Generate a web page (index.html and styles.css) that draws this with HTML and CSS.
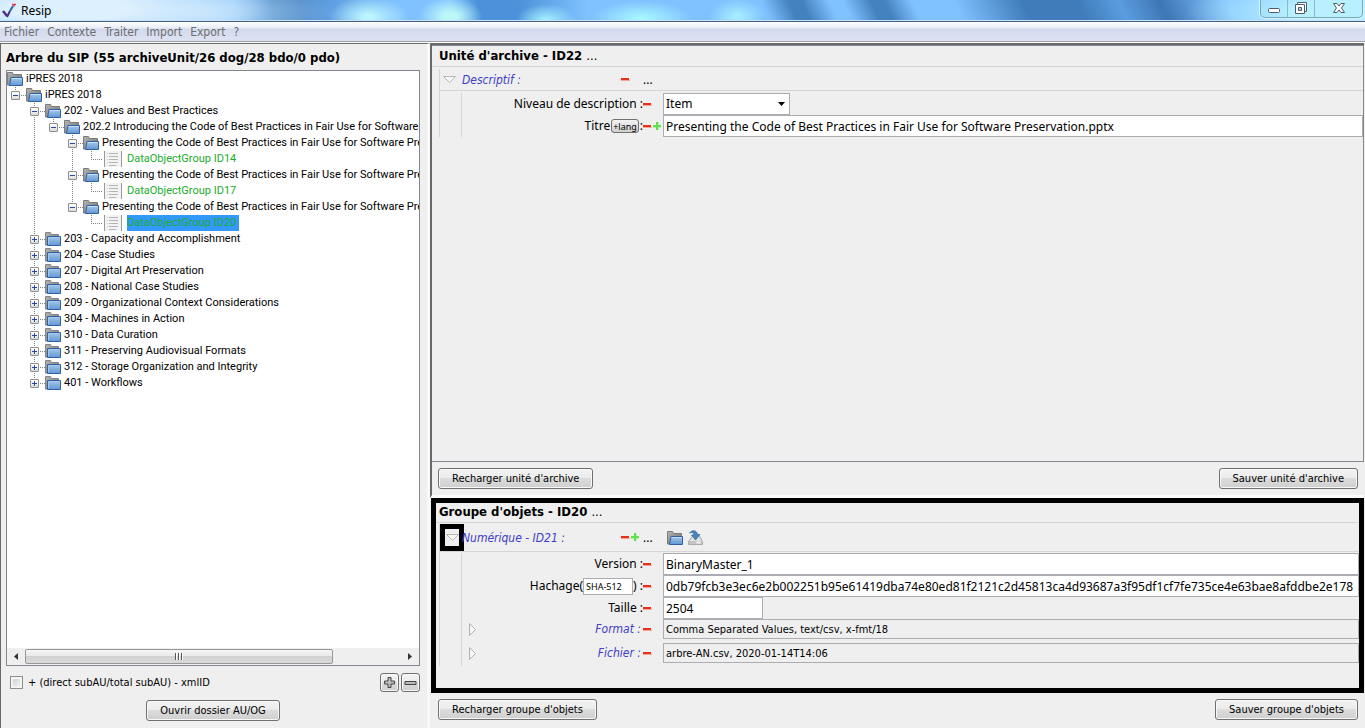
FILE: index.html
```html
<!DOCTYPE html>
<html lang="fr">
<head>
<meta charset="utf-8">
<title>Resip</title>
<link rel="stylesheet" href="styles.css">
</head>
<body>
<svg class="defs" aria-hidden="true">
  <defs>
    <linearGradient id="gray" x1="0" y1="0" x2="1" y2="1"><stop offset="0" stop-color="#b4b4b4"/><stop offset="1" stop-color="#707070"/></linearGradient>
    <linearGradient id="blue" x1="0" y1="0" x2="0" y2="1"><stop offset="0" stop-color="#a9c8ea"/><stop offset="1" stop-color="#5f97d4"/></linearGradient>
    <symbol id="open" viewBox="0 0 16 16">
      <path d="M.5 14V1.500h5l1 2h8V14z" fill="url(#gray)" stroke="#7c7c7c"/>
      <path d="M2.500 14.500 4 6.500h11.500v8z" fill="url(#blue)" stroke="#2f62a5"/>
      <path d="M4.500 7.500h10" stroke="#c9def4"/>
    </symbol>
    <symbol id="closed" viewBox="0 0 16 16">
      <path d="M.5 14V1.500h5l1 2h7V14z" fill="url(#gray)" stroke="#858585"/>
      <path d="M2.500 14.500v-9h13v9z" fill="url(#blue)" stroke="#2f62a5"/>
      <path d="M3.500 13.500v-7h11" fill="none" stroke="#a9c8ea"/>
    </symbol>
    <symbol id="doc" viewBox="0 0 18 16">
      <path d="M0 0h18v16H0z" fill="#f3f3f3"/>
      <path d="M.5 0v16M17.500 0v16" stroke="#999"/>
      <path d="M5 2.500h9M5 5.500h9M5 8.500h9M5 11.500h9M5 14.500h7" stroke="#b4b4b4"/>
      <path d="M3 2.500h1M3 5.500h1M3 8.500h1M3 11.500h1" stroke="#ccc"/>
    </symbol>
    <symbol id="minus" viewBox="0 0 9 9"><path d="M0 5.500h9" stroke="#f5a598"/><path d="M0 3h8v2H0z" fill="#e8301a"/></symbol>
    <symbol id="plus" viewBox="0 0 9 9"><path d="M3 0h3v8H3zM0 3h8v3H0z" fill="#b5f0ad"/><path d="M3 0h2v8H3zM0 3h8v2H0z" fill="#5fe050"/></symbol>
    <symbol id="down" viewBox="0 0 13 7"><path d="M.5 .5h12L6.500 6.500z" fill="#f7f7f7" stroke="#b8b8b8"/></symbol>
    <symbol id="right" viewBox="0 0 7 13"><path d="M.5 .5v12L6.500 6.500z" fill="#f7f7f7" stroke="#b0b0b0"/></symbol>
  </defs>
</svg>

<div class="window">
  <header class="titlebar">
    <svg class="logo" viewBox="0 0 14 16" width="14" height="16"><path d="M1 8 5 13" stroke="#5b2a86" stroke-width="2.500" fill="none"/><path d="M5 14 8 8" stroke="#43307f" stroke-width="2" fill="none"/><path d="M8 8 11 3" stroke="#2467b4" stroke-width="2" fill="none"/><path d="M10 1.500h4M12 1.500v2" stroke="#e0354d" stroke-width="1.500" fill="none"/></svg>
    <span class="app-name">Resip</span>
    <div class="controls">
      <button aria-label="Réduire"><svg width="12" height="16" viewBox="0 0 12 16"><rect x=".5" y="8.500" width="11" height="4" rx="1" fill="#fff" stroke="#4f5a6b"/></svg></button>
      <button aria-label="Restaurer"><svg width="12" height="16" viewBox="0 0 12 16"><path d="M2.500 2.500h9v9h-9z" fill="#fff" stroke="#4f5a6b"/><path d="M.5 4.500h9v9h-9z" fill="#fff" stroke="#4f5a6b"/><path d="M3.500 7.500h3v3h-3z" fill="#9fd4f5" stroke="#4f5a6b"/></svg></button>
      <button class="close" aria-label="Fermer"><svg width="12" height="16" viewBox="0 0 12 16"><path d="M.5 3.500h3.500L6 6l2-2.500h3.500L8.500 8l3 4.500H8L6 10l-2 2.500H.5L3.500 8z" fill="#fff" stroke="#4f5a6b"/></svg></button>
    </div>
  </header>

  <nav class="menu">
    <button>Fichier</button><button>Contexte</button><button>Traiter</button><button>Import</button><button>Export</button><button>?</button>
  </nav>

  <main class="work">
    <section class="left">
      <h1 class="heading">Arbre du SIP (55 archiveUnit/26 dog/28 bdo/0 pdo)</h1>
      <div class="tree-box">
        <div class="tree">
          <div class="row"><svg class="ico"><use href="#open"/></svg><span>iPRES 2018</span></div>
          <ul>
            <li>
              <div class="row"><button class="exp" aria-label="Replier"></button><svg class="ico"><use href="#open"/></svg><span>iPRES 2018</span></div>
              <ul class="nested">
                <li>
                  <div class="row"><button class="exp" aria-label="Replier"></button><svg class="ico"><use href="#open"/></svg><span>202 - Values and Best Practices</span></div>
                  <ul class="nested">
                    <li>
                      <div class="row"><button class="exp" aria-label="Replier"></button><svg class="ico"><use href="#open"/></svg><span>202.2 Introducing the Code of Best Practices in Fair Use for Software</span></div>
                      <ul class="nested">
                        <li>
                          <div class="row"><button class="exp" aria-label="Replier"></button><svg class="ico"><use href="#open"/></svg><span>Presenting the Code of Best Practices in Fair Use for Software Pre</span></div>
                          <ul class="nested"><li><div class="row leaf"><svg class="doc"><use href="#doc"/></svg><span>DataObjectGroup ID14</span></div></li></ul>
                        </li>
                        <li>
                          <div class="row"><button class="exp" aria-label="Replier"></button><svg class="ico"><use href="#open"/></svg><span>Presenting the Code of Best Practices in Fair Use for Software Pre</span></div>
                          <ul class="nested"><li><div class="row leaf"><svg class="doc"><use href="#doc"/></svg><span>DataObjectGroup ID17</span></div></li></ul>
                        </li>
                        <li>
                          <div class="row"><button class="exp" aria-label="Replier"></button><svg class="ico"><use href="#open"/></svg><span>Presenting the Code of Best Practices in Fair Use for Software Pre</span></div>
                          <ul class="nested"><li><div class="row leaf"><svg class="doc"><use href="#doc"/></svg><span class="selected">DataObjectGroup ID20</span></div></li></ul>
                        </li>
                      </ul>
                    </li>
                  </ul>
                </li>
                <li><div class="row"><button class="exp more" aria-label="Déplier"></button><svg class="ico"><use href="#closed"/></svg><span>203 - Capacity and Accomplishment</span></div></li>
                <li><div class="row"><button class="exp more" aria-label="Déplier"></button><svg class="ico"><use href="#closed"/></svg><span>204 - Case Studies</span></div></li>
                <li><div class="row"><button class="exp more" aria-label="Déplier"></button><svg class="ico"><use href="#closed"/></svg><span>207 - Digital Art Preservation</span></div></li>
                <li><div class="row"><button class="exp more" aria-label="Déplier"></button><svg class="ico"><use href="#closed"/></svg><span>208 - National Case Studies</span></div></li>
                <li><div class="row"><button class="exp more" aria-label="Déplier"></button><svg class="ico"><use href="#closed"/></svg><span>209 - Organizational Context Considerations</span></div></li>
                <li><div class="row"><button class="exp more" aria-label="Déplier"></button><svg class="ico"><use href="#closed"/></svg><span>304 - Machines in Action</span></div></li>
                <li><div class="row"><button class="exp more" aria-label="Déplier"></button><svg class="ico"><use href="#closed"/></svg><span>310 - Data Curation</span></div></li>
                <li><div class="row"><button class="exp more" aria-label="Déplier"></button><svg class="ico"><use href="#closed"/></svg><span>311 - Preserving Audiovisual Formats</span></div></li>
                <li><div class="row"><button class="exp more" aria-label="Déplier"></button><svg class="ico"><use href="#closed"/></svg><span>312 - Storage Organization and Integrity</span></div></li>
                <li><div class="row"><button class="exp more" aria-label="Déplier"></button><svg class="ico"><use href="#closed"/></svg><span>401 - Workflows</span></div></li>
              </ul>
            </li>
          </ul>
        </div>
        <div class="scrollbar">
          <button class="arrow" aria-label="Défiler à gauche"><svg width="4" height="7" viewBox="0 0 4 7"><path d="M4 0v7L0 3.500z" fill="#333"/></svg></button>
          <div class="track"><div class="thumb"><i></i><i></i><i></i></div></div>
          <button class="arrow" aria-label="Défiler à droite"><svg width="4" height="7" viewBox="0 0 4 7"><path d="M0 0v7l4-3.500z" fill="#333"/></svg></button>
        </div>
      </div>
      <div class="options">
        <label><input class="tick" type="checkbox">+ (direct subAU/total subAU) - xmlID</label>
        <div class="zoomers">
          <button class="btn small" aria-label="Plus"><svg width="13" height="13" viewBox="0 0 13 13"><path d="M5 1.500h3V5h3.500v3H8v3.500H5V8H1.500V5H5z" fill="#bbb" stroke="#444"/></svg></button>
          <button class="btn small" aria-label="Moins"><svg width="13" height="13" viewBox="0 0 13 13"><path d="M1 5.500h11v3H1z" fill="#bbb" stroke="#444"/></svg></button>
        </div>
      </div>
      <div class="center"><button class="btn">Ouvrir dossier AU/OG</button></div>
    </section>

    <div class="right">
      <section class="unit">
        <div class="panel">
          <h2 class="heading">Unité d'archive - ID22 <button class="dots">...</button></h2>
          <div class="group">
            <div class="group-head">
              <button class="fold" aria-label="Replier"><svg width="13" height="7"><use href="#down"/></svg></button>
              <span class="group-name">Descriptif :</span>
              <button class="act" aria-label="Supprimer"><svg><use href="#minus"/></svg></button>
              <button class="act dots last">...</button>
            </div>
            <div class="fields">
              <div class="field">
                <div class="name"><label for="level">Niveau de description :</label></div>
                <div class="acts"><button class="act" aria-label="Supprimer"><svg><use href="#minus"/></svg></button></div>
                <div class="combo"><select id="level"><option>Item</option></select><svg width="7" height="4" viewBox="0 0 7 4"><path d="M0 0h7L3.500 4z"/></svg></div>
              </div>
              <div class="field">
                <div class="name"><label for="title">Titre</label><button class="lang">+lang</button><span>:</span></div>
                <div class="acts"><button class="act" aria-label="Supprimer"><svg><use href="#minus"/></svg></button><button class="act" aria-label="Ajouter"><svg><use href="#plus"/></svg></button></div>
                <input class="text" id="title" value="Presenting the Code of Best Practices in Fair Use for Software Preservation.pptx">
              </div>
            </div>
          </div>
        </div>
        <div class="bar"><button class="btn">Recharger unité d'archive</button><button class="btn">Sauver unité d'archive</button></div>
      </section>

      <section class="object">
        <div class="panel framed">
          <h2 class="heading">Groupe d'objets - ID20 <button class="dots">...</button></h2>
          <div class="group">
            <div class="group-head tall">
              <button class="fold boxed" aria-label="Replier"><svg width="13" height="7"><use href="#down"/></svg></button>
              <span class="group-name">Numérique - ID21 :</span>
              <button class="act" aria-label="Supprimer"><svg><use href="#minus"/></svg></button>
              <button class="act" aria-label="Ajouter"><svg><use href="#plus"/></svg></button>
              <button class="act dots">...</button>
              <button class="tool" aria-label="Ouvrir"><svg><use href="#open"/></svg></button>
              <button class="tool" aria-label="Enregistrer"><svg viewBox="0 0 16 16"><path d="M4.500 6 .5 11.500v3h14v-3L11.500 6z" fill="#e2e2e2" stroke="#aaa"/><path d="M1 11h13v3H1z" fill="#c4c4c4"/><path d="M8.500 11.500h4v2h-4z" fill="#f5f5f5"/><path d="M1.500 3C4-.5 9 0 9.500 4.500H12L7.500 10 3.500 5H6C6 3 4 2 1.500 3z" fill="#4b82b8" stroke="#2f689f" stroke-width=".7"/></svg></button>
            </div>
            <div class="fields padded">
              <div class="field">
                <div class="name"><label for="version">Version :</label></div>
                <div class="acts"><button class="act" aria-label="Supprimer"><svg><use href="#minus"/></svg></button></div>
                <input class="text" id="version" value="BinaryMaster_1">
              </div>
              <div class="field">
                <div class="name"><label for="hash">Hachage(</label><input class="algo" aria-label="Algorithme" value="SHA-512"><span>) :</span></div>
                <div class="acts"><button class="act" aria-label="Supprimer"><svg><use href="#minus"/></svg></button></div>
                <input class="text" id="hash" value="0db79fcb3e3ec6e2b002251b95e61419dba74e80ed81f2121c2d45813ca4d93687a3f95df1cf7fe735ce4e63bae8afddbe2e178">
              </div>
              <div class="field">
                <div class="name"><label for="size">Taille :</label></div>
                <div class="acts"><button class="act" aria-label="Supprimer"><svg><use href="#minus"/></svg></button></div>
                <input class="text short" id="size" value="2504">
              </div>
              <div class="field">
                <div class="name sub"><button class="unfold" aria-label="Déplier"><svg width="7" height="13"><use href="#right"/></svg></button><label for="format">Format :</label></div>
                <div class="acts"><button class="act" aria-label="Supprimer"><svg><use href="#minus"/></svg></button></div>
                <input class="text summary" id="format" readonly value="Comma Separated Values, text/csv, x-fmt/18">
              </div>
              <div class="field spaced">
                <div class="name sub"><button class="unfold" aria-label="Déplier"><svg width="7" height="13"><use href="#right"/></svg></button><label for="file">Fichier :</label></div>
                <div class="acts"><button class="act" aria-label="Supprimer"><svg><use href="#minus"/></svg></button></div>
                <input class="text summary" id="file" readonly value="arbre-AN.csv, 2020-01-14T14:06">
              </div>
            </div>
          </div>
        </div>
        <div class="bar"><button class="btn">Recharger groupe d'objets</button><button class="btn">Sauver groupe d'objets</button></div>
      </section>
    </div>
  </main>
</div>
</body>
</html>
```
FILE: styles.css
```css
* { box-sizing: border-box; }
body { margin: 0; background: #efefef; color: #000; font: 12px/16px "Noto Sans", "DejaVu Sans", sans-serif; }
button, input, select { font: inherit; color: inherit; margin: 0; padding: 0; border: 0; background: none; }
button { flex: none; }
svg { display: block; flex: none; }
ul { list-style: none; margin: 0; padding: 0; }
.defs { position: absolute; width: 0; height: 0; }
.window { min-height: 100vh; display: flex; flex-direction: column; }

/* title bar */
.titlebar {
  height: 22px; display: flex; align-items: center; padding: 0 2px; border-bottom: 1px solid #45617f;
  box-shadow: inset 0 -1px #c5e4fb;
  background:
    radial-gradient(ellipse 200px 40px at 5% 40%, #e3f3fdee 30%, #d4ebfc00),
    radial-gradient(ellipse 130px 30px at 15% 60%, #c2e1fbcc 10%, #c2e1fb00),
    radial-gradient(ellipse 40px 20px at 27% 80%, #bdf5ff 10%, #bdf5ff00),
    radial-gradient(ellipse 32px 20px at 33% 80%, #bdf8f8 20%, #bdf8f800),
    radial-gradient(ellipse 30px 16px at 40% 95%, #a5f2ff 0%, #a5f2ff00),
    radial-gradient(ellipse 50px 18px at 47% 90%, #a9fbff 0%, #a9fbff00),
    radial-gradient(ellipse 28px 18px at 54% 80%, #a9f0ff 0%, #a9f0ff00),
    radial-gradient(ellipse 180px 40px at 100% 60%, #b8f0ff 40%, #b8f0ff00),
    linear-gradient(65deg, transparent 56%, #4482be 58% 59%, transparent 61% 62%, #4482be 64% 65%, transparent 67% 70%, #3f7cb9 75% 79%, #5a9de0 82%, #3f76b4 85%, transparent 90%),
    linear-gradient(90deg, transparent 17%, #4a88c6 20% 22%, #5d9de0 24%, transparent 29% 33%, #4c92da 35% 38%, transparent 43%),
    #80c2ff;
}
.logo { margin-right: 5px; }
.controls { margin-left: auto; align-self: flex-start; display: flex; height: 18px; border: 1px solid #7aa5bb; border-top: 0; border-radius: 0 0 5px 5px; box-shadow: 0 0 0 1px #d3f3ff; }
.controls button { width: 27px; display: flex; justify-content: center; border-right: 1px solid #8db9ce; }
.controls button.close { width: 47px; border: 0; }

/* menu */
.menu { display: flex; gap: 8px; height: 20px; padding: 0 4px; border-bottom: 1px solid #9d9da5; background: linear-gradient(#fff, #e8ecf6 6px, #d3daed 7px, #dde3f3); color: #6d6d6d; font-family: "DejaVu Sans Condensed", "DejaVu Sans", sans-serif; line-height: 18px; }

.work { flex: 1; display: grid; grid-template-columns: 430px minmax(0, 1fr); border-top: 1px solid #fff; }
.heading { margin: 0; font: bold 13px/16px "DejaVu Sans Condensed", "DejaVu Sans", sans-serif; white-space: nowrap; }
.dots { font-weight: normal; }

/* left column */
.left { display: flex; flex-direction: column; min-width: 0; border-top: 1px solid #696969; border-left: 1px solid #696969; padding: 6px 7px 7px 5px; border-right: 3px solid #f9f9f9; }
.tree-box { flex: 1; display: flex; flex-direction: column; margin-top: 4px; border: 1px solid #828790; background: #fff; }
.tree { flex: 1; overflow: hidden; font-family: Roboto, sans-serif; font-size: 11px; }
.row { display: flex; align-items: center; height: 16px; white-space: nowrap; }
.ico { width: 16px; height: 16px; margin-right: 3px; }
.nested { margin-left: 19px; }
.tree li {
  background:
    repeating-linear-gradient(#808080 0 1px, transparent 1px 2px) 8px 0 / 1px 100% no-repeat,
    repeating-linear-gradient(90deg, #808080 0 1px, transparent 1px 2px) 8px 8px / 11px 1px no-repeat;
}
.tree li:last-child { background-size: 1px 8px, 11px 1px; }
.exp {
  width: 9px; height: 9px; margin: 0 6px 0 4px; border: 1px solid #8e8e8e; border-radius: 1px;
  background: linear-gradient(#2d4aa0, #2d4aa0) center / 5px 1px no-repeat, linear-gradient(#fff, #ddd);
}
.exp.more { background: linear-gradient(#2d4aa0, #2d4aa0) center / 5px 1px no-repeat, linear-gradient(#2d4aa0, #2d4aa0) center / 1px 5px no-repeat, linear-gradient(#fff, #ddd); }
.leaf { padding-left: 21px; color: #1cab2a; }
.leaf span { padding-right: 3px; }
.doc { width: 18px; height: 16px; margin-right: 5px; }
.selected { background: #3399ff; }
.scrollbar { display: flex; height: 17px; background: #efefef; }
.arrow { width: 18px; display: flex; align-items: center; justify-content: center; }
.track { flex: 1; display: flex; padding: 1px 0; }
.thumb { width: 82%; display: flex; align-items: center; justify-content: center; gap: 1px; border: 1px solid #979797; border-radius: 2px; background: linear-gradient(#f5f5f5, #e8e8e8 49%, #d2d2d2 50%, #dadada); }
.thumb i { width: 2px; height: 7px; border-left: 1px solid #555; background: #fff; }
.options { display: flex; justify-content: space-between; align-items: center; margin-top: 7px; font: 11px/16px "DejaVu Sans Condensed", "DejaVu Sans", sans-serif; }
.options label { display: flex; align-items: center; gap: 5px; padding-left: 4px; }
.tick { appearance: none; width: 13px; height: 13px; border: 1px solid #8e8f8f; background: linear-gradient(135deg, #c9ced3, #f6f6f6); box-shadow: inset 0 0 0 2px #f4f4f4; }
.zoomers { display: flex; gap: 2px; }
.center { display: flex; justify-content: center; margin-top: 8px; }
.btn { height: 21px; padding: 0 13px; border: 1px solid #707070; border-radius: 3px; background: linear-gradient(#f3f3f3, #ebebeb 49%, #dcdcdc 50%, #cfcfcf); box-shadow: inset 0 0 0 1px #f8f8f8; font: 11px/16px "DejaVu Sans Condensed", "DejaVu Sans", sans-serif; white-space: nowrap; }
.btn.small { width: 19px; height: 19px; padding: 0; display: flex; align-items: center; justify-content: center; }

/* right column */
.right { display: flex; flex-direction: column; min-width: 0; padding-right: 1px; }
.unit { flex: 1; display: flex; flex-direction: column; border-top: 2px solid #696969; border-left: 2px solid #696969; border-bottom: 3px solid #fbfbfb; }
.unit .panel { flex: 1; border: 1px solid #828790; border-left: 0; }
.panel { padding-left: 7px; overflow: hidden; }
.panel .heading { height: 21px; padding: 2px 0 2px 0; margin-left: -7px; padding-left: 7px; border-bottom: 1px solid #d5d5d5; }
.bar { display: flex; justify-content: space-between; padding: 6px 6px; }
.group { border-left: 1px solid #d5d5d5; margin-top: 2px; }
.group-head { display: flex; align-items: center; height: 22px; border-bottom: 1px solid #d5d5d5; }
.group-head.tall { height: 28px; }
.fold { width: 22px; display: flex; align-items: center; padding-left: 3px; }
.fold.boxed { width: 24px; height: 27px; margin-right: -2px; border: 5px solid #000; padding-left: 0; justify-content: center; overflow: hidden; }
.group-name { width: 159px; color: #4040c8; font: italic 12px/16px "DejaVu Sans Condensed", "DejaVu Sans", sans-serif; white-space: nowrap; }
.act { width: 10px; height: 16px; display: flex; align-items: center; }
.act svg { width: 9px; height: 9px; }
.group-head .dots { width: 26px; padding-left: 2px; line-height: 16px; }
.group-head .dots.last { margin-left: 10px; }
.tool { width: 21px; }
.tool svg { width: 16px; height: 16px; }
.fields { margin: 2px 0 0 21px; border-left: 1px solid #d5d5d5; }
.fields.padded { margin-top: 1px; padding-bottom: 3px; }
.field { display: grid; grid-template-columns: 181px 20px minmax(0, 1fr); align-items: center; }
.field.spaced { margin-top: 4px; }
.name { display: flex; justify-content: flex-end; align-items: center; white-space: nowrap; }
.sub { color: #4040c8; font: italic 12px/16px "DejaVu Sans Condensed", "DejaVu Sans", sans-serif; padding-right: 2px; }
.unfold { margin: 0 auto 0 7px; }
.acts { display: flex; }
.lang { height: 14px; border: 1px solid #707070; border-radius: 3px; background: linear-gradient(#f3f3f3, #cfcfcf); font-size: 9px; line-height: 11px; padding: 0 1px; margin: 0 1px; }
.text { width: 100%; height: 22px; border: 1px solid #abadb3; background: #fff; padding: 0 2px; }
.short { width: 100px; }
.summary { height: 20px; background: #efefef; font-family: "DejaVu Sans Condensed", "DejaVu Sans", sans-serif; font-size: 11px; }
.algo { width: 50px; height: 17px; border: 1px solid #abadb3; background: #fff; font-size: 9px; padding: 0 2px; }
.combo { position: relative; width: 127px; height: 22px; }
.combo select { appearance: none; width: 100%; height: 100%; border: 1px solid #abadb3; background: #fff; padding: 0 2px; }
.combo svg { position: absolute; right: 5px; top: 9px; pointer-events: none; }
.object { padding-left: 1px; }
.framed { border: 5px solid #000; padding: 0 0 22px 3px; }
.framed .heading { height: 20px; padding-top: 1px; margin-left: -3px; padding-left: 3px; }
.framed .group { margin-top: 1px; }
.object .bar { padding: 6px 6px 8px 7px; }
```
